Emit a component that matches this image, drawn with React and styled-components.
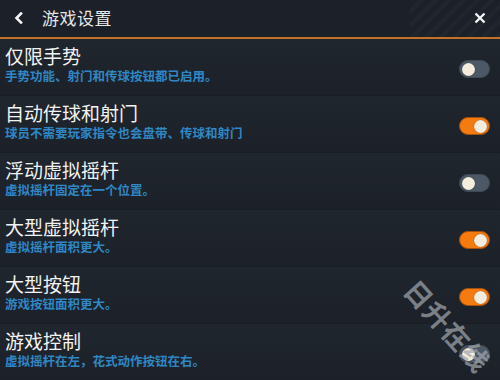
import React from 'react';
import styled, { createGlobalStyle } from 'styled-components';

const GlobalStyle = createGlobalStyle`
	html, body {
		margin: 0;
		padding: 0;
		background: #1d222a;
	}
	* {
		box-sizing: border-box;
	}
`;

const settings = [
	{ title: '仅限手势', desc: '手势功能、射门和传球按钮都已启用。', on: false },
	{ title: '自动传球和射门', desc: '球员不需要玩家指令也会盘带、传球和射门', on: true },
	{ title: '浮动虚拟摇杆', desc: '虚拟摇杆固定在一个位置。', on: false },
	{ title: '大型虚拟摇杆', desc: '虚拟摇杆面积更大。', on: true },
	{ title: '大型按钮', desc: '游戏按钮面积更大。', on: true },
	{ title: '游戏控制', desc: '虚拟摇杆在左，花式动作按钮在右。', on: false },
];

const App = () => {
	return (
		<>
			<GlobalStyle />
			<Screen>
				<Header>
					<BackButton>
						<svg width="12" height="12" viewBox="0 0 12 12">
							<path d="M8 1.5 L3.5 6 L8 10.5" fill="none" stroke="#f4f4f4" strokeWidth="2.6" strokeLinecap="square" />
						</svg>
					</BackButton>
					<Title>游戏设置</Title>
					<CloseButton>
						<svg width="12" height="12" viewBox="0 0 12 12">
							<path d="M1.5 1.5 L10.5 10.5 M10.5 1.5 L1.5 10.5" stroke="#f4f4f4" strokeWidth="2.4" />
						</svg>
					</CloseButton>
				</Header>
				<List>
					{settings.map((s) => (
						<Row key={s.title}>
							<TextArea>
								<RowTitle>{s.title}</RowTitle>
								<RowDesc>{s.desc}</RowDesc>
							</TextArea>
							<Toggle on={s.on ? 1 : 0}>
								<Knob />
							</Toggle>
						</Row>
					))}
				</List>
				<Watermark>日升在线</Watermark>
			</Screen>
		</>
	);
};

const Screen = styled.div`
	position: relative;
	width: 500px;
	height: 380px;
	overflow: hidden;
	background: #1d222a;
	font-family: 'Noto Sans CJK SC', 'Noto Sans', sans-serif;
`;

const Header = styled.div`
	display: flex;
	align-items: center;
	height: 39px;
	padding: 0 14px 2px 13px;
	background:
		repeating-linear-gradient(135deg, transparent 0 6px, rgba(255, 255, 255, 0.025) 6px 10px) right / 90px 100% no-repeat,
		#1b2029;
	border-bottom: 2px solid #c2712a;
`;

const BackButton = styled.div`
	display: flex;
	width: 14px;
	margin-right: 15px;
`;

const Title = styled.h1`
	flex: 1;
	margin: 0;
	font-size: 17px;
	font-weight: 400;
	color: #e6e6e6;
	letter-spacing: 0.5px;
`;

const CloseButton = styled.div`
	display: flex;
`;

const List = styled.div`
	display: flex;
	flex-direction: column;
`;

const Row = styled.div`
	display: flex;
	align-items: flex-start;
	height: 57px;
	padding: 5px 10px 0 5px;
	border-bottom: 1px solid #191d24;
	background: linear-gradient(#20262e, #1c2129);
`;

const TextArea = styled.div`
	flex: 1;
	display: grid;
	gap: 1px;
`;

const RowTitle = styled.div`
	font-size: 19px;
	line-height: 23px;
	color: #f2f2f2;
`;

const RowDesc = styled.div`
	font-size: 12.5px;
	line-height: 15px;
	font-weight: 700;
	color: #2f87c4;
`;

const Toggle = styled.div`
	display: flex;
	align-items: center;
	justify-content: ${({ on }) => (on ? 'flex-end' : 'flex-start')};
	width: 31px;
	height: 18px;
	margin-top: 16px;
	padding: 0 2px;
	border-radius: 9px;
	background: ${({ on }) => (on ? '#f57a10' : '#4c5866')};
	border: 1px solid ${({ on }) => (on ? '#a4500c' : '#3f4955')};
`;

const Knob = styled.div`
	width: 13px;
	height: 13px;
	border-radius: 50%;
	background: #f4ecdc;
	box-shadow: 0 0 1px rgba(0, 0, 0, 0.5);
`;

const Watermark = styled.div`
	position: absolute;
	left: 392px;
	top: 306px;
	font-size: 27px;
	font-weight: 700;
	letter-spacing: 1px;
	color: rgba(160, 165, 172, 0.72);
	transform: rotate(48deg);
	transform-origin: center;
	pointer-events: none;
	white-space: nowrap;
`;

export default App;
